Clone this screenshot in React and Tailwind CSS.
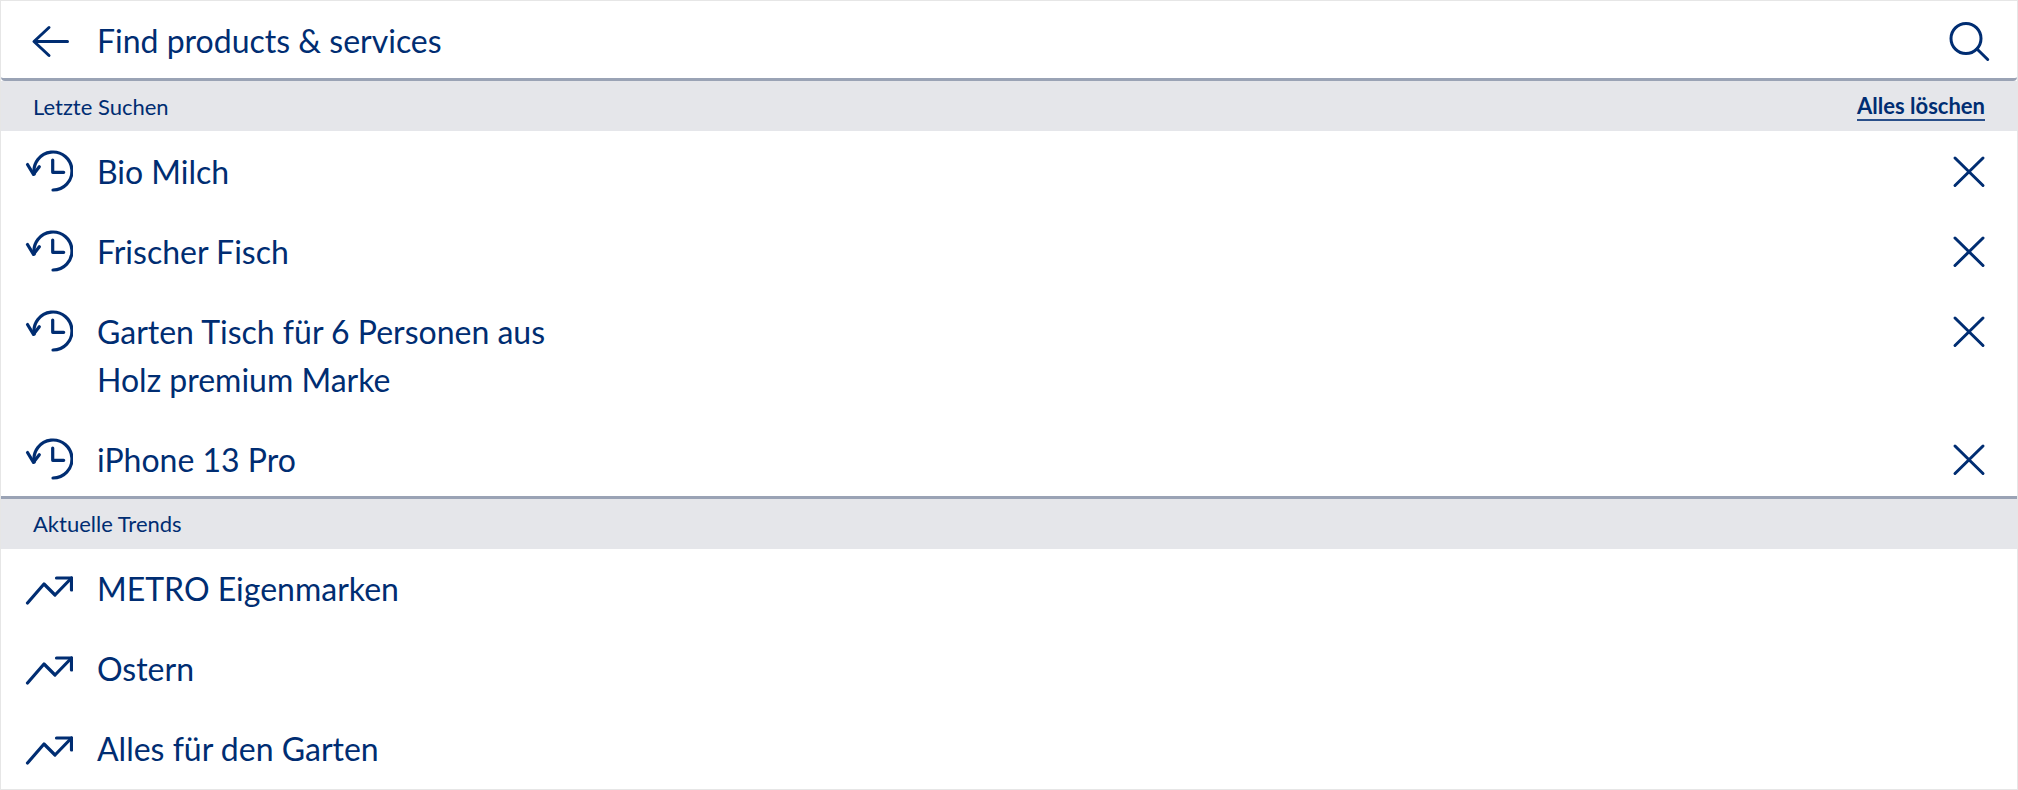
const HistoryIcon = () => (
  <svg width="48" height="48" viewBox="0 0 48 48" fill="none" stroke="#002d72" strokeWidth="3.2" strokeLinecap="round" strokeLinejoin="round" className="shrink-0">
    <path d="M28 42A19 19 0 1 0 9.2 26" />
    <path d="M2.5 16.5L8.5 26.3l5.8-7.6" />
    <path d="M27.7 12v12.3h11" />
  </svg>
);

const TrendIcon = () => (
  <svg width="48" height="48" viewBox="0 0 48 48" fill="none" stroke="#002d72" strokeWidth="3.2" strokeLinecap="round" strokeLinejoin="round" className="shrink-0">
    <path d="M2.5 38L19 19l11 11L46.5 13" />
    <path d="M31.5 13h15v12" />
  </svg>
);

const CloseIcon = () => (
  <svg width="48" height="48" viewBox="0 0 48 48" fill="none" stroke="#002d72" strokeWidth="3" strokeLinecap="round" className="shrink-0">
    <path d="M10 10l28 27.5M38 10L10 37.5" />
  </svg>
);

const Row = ({ icon, children, action }) => (
  <div className="flex items-start gap-6 pl-6 pr-6 py-4">
    {icon}
    <div className="flex-1 text-[32px] leading-[48px]">{children}</div>
    {action && <CloseIcon />}
  </div>
);

export default function App() {
  return (
    <div className="min-h-[790px] bg-[#e6e6e6] p-px text-[#002d72] font-['Lato',sans-serif]">
      <div className="bg-white h-[788px] overflow-hidden">
        <div className="flex items-center gap-6 h-[80px] px-6 pt-0.5 bg-white border-b-[3px] border-[#9aa3b5] rounded-[4px]">
          <svg width="48" height="48" viewBox="0 0 48 48" fill="none" stroke="#002d72" strokeWidth="3" strokeLinecap="round" strokeLinejoin="round" className="shrink-0">
            <path d="M9.5 24.5h33M24 10.5l-15 14 15 14" />
          </svg>
          <div className="flex-1 text-[32px]">Find products &amp; services</div>
          <svg width="48" height="48" viewBox="0 0 48 48" fill="none" stroke="#002d72" strokeWidth="3" strokeLinecap="round" className="shrink-0">
            <circle cx="21" cy="21.5" r="15" />
            <path d="M32 32l10.7 10.5" />
          </svg>
        </div>
        <div className="flex items-center justify-between h-[50px] px-8 pt-0.5 bg-[#e5e6ea] text-[22px] leading-[32px]">
          <span>Letzte Suchen</span>
          <span className="font-bold border-b-2 border-[#2a4f8a] leading-[26px]">Alles löschen</span>
        </div>
        <div className="pt-px pb-px h-[365px] overflow-hidden">
          <Row icon={<HistoryIcon />} action>Bio Milch</Row>
          <Row icon={<HistoryIcon />} action>Frischer Fisch</Row>
          <Row icon={<HistoryIcon />} action>Garten Tisch für 6 Personen aus<br />Holz premium Marke</Row>
          <Row icon={<HistoryIcon />} action>iPhone 13 Pro</Row>
        </div>
        <div className="flex items-center h-[53px] px-8 bg-[#e5e6ea] border-t-[3px] border-[#9aa3b5] text-[22px] leading-[32px]">
          <span>Aktuelle Trends</span>
        </div>
        <div>
          <Row icon={<TrendIcon />}>METRO Eigenmarken</Row>
          <Row icon={<TrendIcon />}>Ostern</Row>
          <Row icon={<TrendIcon />}>Alles für den Garten</Row>
        </div>
      </div>
    </div>
  );
}
